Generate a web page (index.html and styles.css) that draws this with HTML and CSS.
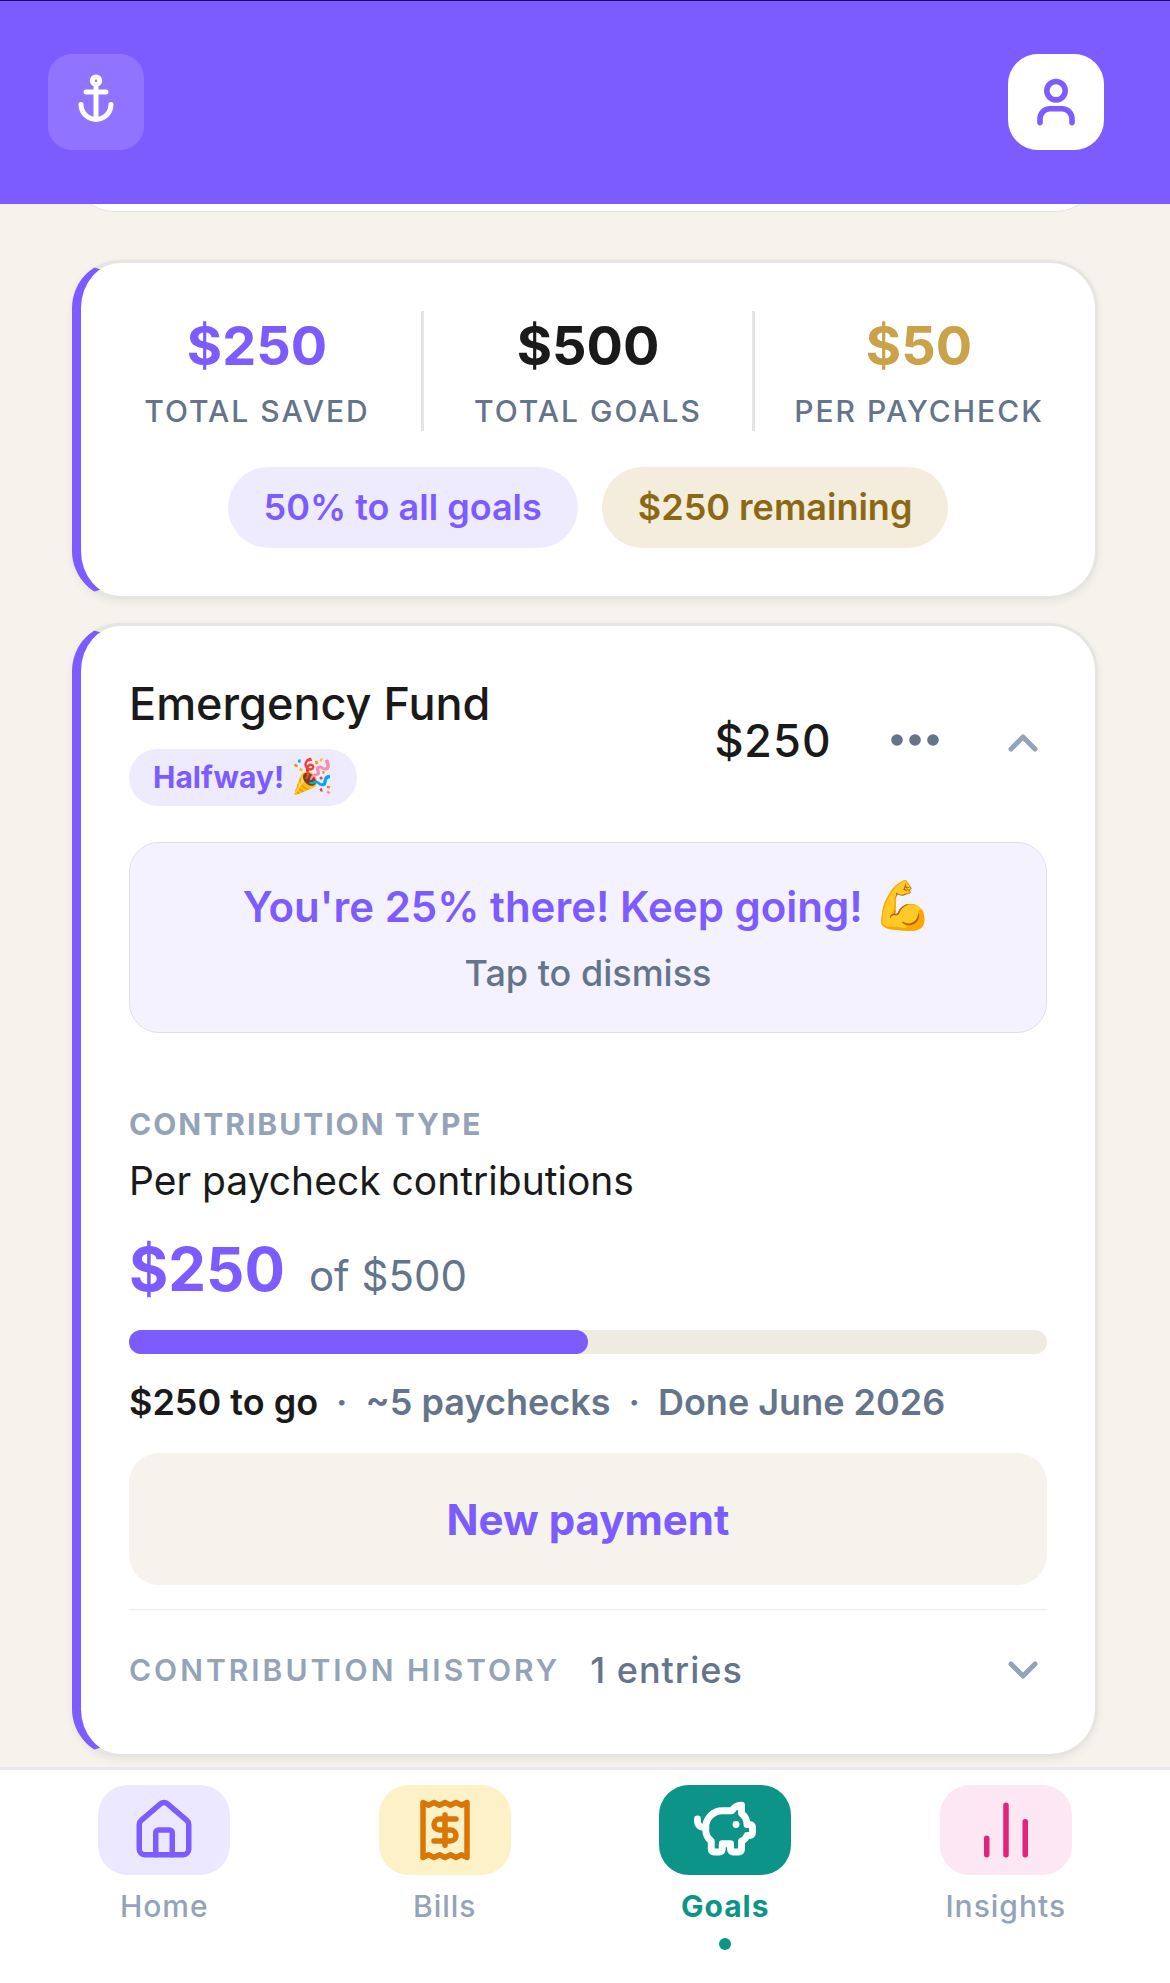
FILE: index.html
```html
<!DOCTYPE html>
<html lang="en">
<head>
    <meta charset="UTF-8">
    <meta name="viewport" content="width=device-width, initial-scale=1.0">
    <title>Goals</title>
    <link rel="stylesheet" href="styles.css">
</head>
<body>
    <header class="topbar">
        <button class="tile anchor" aria-label="Menu">
            <svg viewBox="0 0 60 60" fill="none" stroke="currentColor" stroke-width="5" stroke-linecap="round">
                <circle cx="30" cy="8.7" r="3.7"/>
                <path d="M30 12.5V47M20 20h20M15 32.5a15 15 0 0 0 30 0"/>
            </svg>
        </button>
        <button class="tile user" aria-label="Account">
            <svg viewBox="0 0 60 60" fill="none" stroke="currentColor" stroke-width="5.6" stroke-linecap="round">
                <circle cx="30" cy="18.7" r="9.2"/>
                <path d="M14 50.4v-3.6a10 10 0 0 1 10-10h12a10 10 0 0 1 10 10v3.6"/>
            </svg>
        </button>
    </header>

    <main class="content">
        <!-- end of the card scrolled under the top bar -->
        <div class="scrolled"></div>

        <section class="card summary">
            <div class="stats">
                <div class="stat">
                    <div class="value purple">$250</div>
                    <div class="name">TOTAL SAVED</div>
                </div>
                <div class="divider"></div>
                <div class="stat">
                    <div class="value">$500</div>
                    <div class="name">TOTAL GOALS</div>
                </div>
                <div class="divider"></div>
                <div class="stat">
                    <div class="value gold">$50</div>
                    <div class="name">PER PAYCHECK</div>
                </div>
            </div>
            <div class="pills">
                <span class="pill">50% to all goals</span>
                <span class="pill pill-gold">$250 remaining</span>
            </div>
        </section>

        <section class="card goal">
            <div class="goal-head">
                <div class="goal-title">
                    <h2>Emergency Fund</h2>
                    <span class="badge">Halfway! <span class="emoji">🎉</span></span>
                </div>
                <span class="amount">$250</span>
                <button class="more" aria-label="More options">
                    <svg viewBox="0 0 48 12" fill="currentColor">
                        <circle cx="6" cy="6" r="5.8"/>
                        <circle cx="24" cy="6" r="5.8"/>
                        <circle cx="42" cy="6" r="5.8"/>
                    </svg>
                </button>
                <button class="chevron" aria-label="Collapse">
                    <svg viewBox="0 0 48 48" fill="none" stroke="currentColor" stroke-width="5" stroke-linecap="round" stroke-linejoin="round">
                        <path d="M12 33l12-12 12 12"/>
                    </svg>
                </button>
            </div>

            <button class="banner">
                <span class="banner-title">You're 25% there! Keep going! <span class="emoji">💪</span></span>
                <span class="banner-hint">Tap to dismiss</span>
            </button>

            <div class="label">CONTRIBUTION TYPE</div>
            <div class="type">Per paycheck contributions</div>
            <div class="progress-text">
                <span class="saved">$250</span>
                <span class="target">of $500</span>
            </div>
            <div class="bar"><div class="fill" style="width:50%"></div></div>
            <div class="meta">
                <span class="togo">$250 to go</span>
                <span>·</span>
                <span>~5 paychecks</span>
                <span>·</span>
                <span>Done June 2026</span>
            </div>
            <button class="payment">New payment</button>
            <button class="history">
                <span class="label wide">CONTRIBUTION HISTORY</span>
                <span class="entries">1 entries</span>
                <span class="chevron">
                    <svg viewBox="0 0 48 48" fill="none" stroke="currentColor" stroke-width="5" stroke-linecap="round" stroke-linejoin="round">
                        <path d="M12 18l12 12 12-12"/>
                    </svg>
                </span>
            </button>
        </section>
    </main>

    <nav class="tabs">
        <a href="#home" class="tab home">
            <span class="icon">
                <svg viewBox="0 0 24 24">
                    <path d="M3 10a2 2 0 0 1 .709-1.528l7-5.999a2 2 0 0 1 2.582 0l7 5.999A2 2 0 0 1 21 10v9a2 2 0 0 1-2 2H5a2 2 0 0 1-2-2z"/>
                    <path d="M15 21v-8a1 1 0 0 0-1-1h-4a1 1 0 0 0-1 1v8"/>
                </svg>
            </span>
            Home
        </a>
        <a href="#bills" class="tab bills">
            <span class="icon">
                <svg viewBox="0 0 24 24">
                    <path d="M4 2v20l2-1 2 1 2-1 2 1 2-1 2 1 2-1 2 1V2l-2 1-2-1-2 1-2-1-2 1-2-1-2 1Z"/>
                    <path d="M16 8h-6a2 2 0 1 0 0 4h4a2 2 0 1 1 0 4H8M12 17.5v-11"/>
                </svg>
            </span>
            Bills
        </a>
        <a href="#goals" class="tab goals active">
            <span class="icon">
                <svg viewBox="0 0 24 24">
                    <path d="M11 17h3v2a1 1 0 0 0 1 1h2a1 1 0 0 0 1-1v-3a3.16 3.16 0 0 0 2-2h1a1 1 0 0 0 1-1v-2a1 1 0 0 0-1-1h-1a5 5 0 0 0-2-4V3a4 4 0 0 0-3.2 1.6l-.3.4H11a6 6 0 0 0-6 6v1a5 5 0 0 0 2 4v3a1 1 0 0 0 1 1h2a1 1 0 0 0 1-1z"/>
                    <path d="M16 10h.01M2 8v1a2 2 0 0 0 2 2h1"/>
                </svg>
            </span>
            Goals
        </a>
        <a href="#insights" class="tab insights">
            <span class="icon">
                <svg viewBox="0 0 24 24">
                    <path d="M5 21v-6M12 21V3M19 21V9"/>
                </svg>
            </span>
            Insights
        </a>
    </nav>
</body>
</html>
```
FILE: styles.css
```css
* {
    margin: 0;
    padding: 0;
    box-sizing: border-box;
}
body {
    min-height: 100vh;
    display: flex;
    flex-direction: column;
    background: #f6f3ec;
    color: #1a1a1a;
    font-family: Inter, "Liberation Sans", sans-serif;
    font-size: 36px;
}
button {
    border: none;
    background: none;
    font: inherit;
    color: inherit;
    cursor: pointer;
}
svg {
    display: block;
}
.topbar {
    display: flex;
    justify-content: space-between;
    padding: 53px 66px 54px 48px;
    border-top: 1px solid #12006b;
    background: #7c5cff;
    position: relative;
    z-index: 1;
}
.tile {
    width: 96px;
    height: 96px;
    border-radius: 24px;
    display: flex;
    align-items: center;
    justify-content: center;
}
.tile svg {
    width: 60px;
    height: 60px;
}
.anchor {
    background: rgba(255, 255, 255, .15);
    color: #fff;
}
.user {
    background: #fff;
    color: #7c5cff;
    border-radius: 30px;
}
.content {
    flex: 1;
    padding: 0 72px 10px;
}
.scrolled {
    height: 96px;
    margin-top: -88px;
    margin-bottom: 48px;
    background: #fff;
    border: 1px solid #e5e5e0;
    border-radius: 42px;
}
.card {
    background: #fff;
    border: 3px solid #e5e5e2;
    border-left: 9px solid #7c5cff;
    border-radius: 48px;
    box-shadow: 0 3px 9px rgba(0, 0, 0, .06);
}
.summary {
    padding: 48px 12px;
    margin-bottom: 24px;
}
.stats {
    display: flex;
    text-align: center;
}
.stat {
    flex: 1;
}
.divider {
    width: 3px;
    background: #e5e5e5;
}
.value {
    font-size: 54px;
    line-height: 70px;
    font-weight: 700;
    margin-bottom: 10px;
}
.name {
    font-size: 30px;
    line-height: 40px;
    font-weight: 500;
    letter-spacing: 2px;
    color: #64748b;
}
.purple {
    color: #7c5cff;
}
.gold {
    color: #c9a24a;
}
.pills {
    display: flex;
    justify-content: center;
    gap: 24px;
    margin-top: 36px;
}
.pill {
    padding: 0 36px;
    line-height: 81px;
    border-radius: 42px;
    font-weight: 600;
    background: #efebff;
    color: #7c5cff;
}
.pill-gold {
    background: #f4eddd;
    color: #8b6914;
}
.goal {
    padding: 48px;
}
.goal-head {
    display: flex;
    align-items: center;
    gap: 36px;
    margin-bottom: 36px;
}
.goal-title {
    flex: 1;
    display: flex;
    flex-direction: column;
    align-items: flex-start;
    gap: 15px;
}
h2 {
    font-size: 45px;
    line-height: 60px;
    font-weight: 500;
}
.badge {
    height: 57px;
    padding: 0 24px;
    border-radius: 30px;
    background: #efebff;
    color: #7c5cff;
    font-size: 30px;
    line-height: 57px;
    font-weight: 700;
}
.emoji {
    line-height: 1;
}
.badge .emoji {
    font-size: 34px;
}
.banner .emoji {
    font-size: 48px;
}
.amount {
    font-size: 45px;
    font-weight: 500;
    font-variant-numeric: tabular-nums;
}
.more {
    width: 96px;
    height: 96px;
    display: flex;
    align-items: center;
    justify-content: center;
    color: #64748b;
}
.more svg {
    width: 48px;
    height: 12px;
}
.chevron {
    color: #94a3b8;
}
.chevron svg {
    width: 48px;
    height: 48px;
}
.banner {
    display: flex;
    flex-direction: column;
    align-items: center;
    width: 100%;
    padding: 36px;
    gap: 15px;
    border: 1px solid #e0dfe4;
    border-radius: 30px;
    background: #f5f2ff;
    margin-bottom: 73px;
}
.banner-title {
    height: 56px;
    font-size: 42px;
    line-height: 56px;
    font-weight: 600;
    color: #7c5cff;
}
.banner-hint {
    line-height: 46px;
    font-weight: 500;
    color: #64748b;
}
.label {
    font-size: 30px;
    line-height: 36px;
    font-weight: 700;
    letter-spacing: 2px;
    color: #94a3b8;
}
.wide {
    font-weight: 600;
    letter-spacing: 3px;
}
.type {
    margin-top: 12px;
    font-size: 39px;
    line-height: 54px;
}
.progress-text {
    display: flex;
    align-items: baseline;
    gap: 24px;
    margin: 25px 0 18px;
    line-height: 72px;
}
.saved {
    font-size: 60px;
    font-weight: 700;
    color: #7c5cff;
}
.target {
    font-size: 42px;
    color: #64748b;
}
.bar {
    height: 24px;
    border-radius: 12px;
    background: #efeae2;
}
.fill {
    height: 100%;
    border-radius: 12px;
    background: #7c5cff;
}
.meta {
    display: flex;
    gap: 18px;
    margin: 24px 0 27px;
    line-height: 48px;
    font-weight: 600;
    color: #64748b;
}
.togo {
    color: #1a1a1a;
}
.payment {
    display: block;
    width: 100%;
    height: 132px;
    border-radius: 30px;
    background: #f6f3ec;
    color: #7c5cff;
    font-size: 42px;
    font-weight: 700;
    margin-bottom: 24px;
}
.history {
    display: flex;
    align-items: center;
    width: 100%;
    height: 97px;
    padding-top: 24px;
    border-top: 1px solid #ededea;
    text-align: left;
}
.entries {
    flex: 1;
    margin-left: 30px;
    font-weight: 500;
    letter-spacing: 1px;
    color: #64748b;
}
.tabs {
    display: flex;
    padding: 15px 24px 30px;
    border-top: 3px solid #e9e7f5;
    background: #fff;
    position: sticky;
    bottom: 0;
}
.tab {
    flex: 1;
    display: flex;
    flex-direction: column;
    align-items: center;
    height: 168px;
    font-size: 30px;
    line-height: 36px;
    font-weight: 500;
    letter-spacing: 1px;
    color: #94a3b8;
    text-decoration: none;
}
.icon {
    width: 132px;
    height: 90px;
    margin-bottom: 13px;
    border-radius: 30px;
    display: flex;
    align-items: center;
    justify-content: center;
}
.icon svg {
    width: 66px;
    height: 66px;
    fill: none;
    stroke: currentColor;
    stroke-width: 2;
    stroke-linecap: round;
    stroke-linejoin: round;
}
.home .icon {
    background: #ece8ff;
    color: #7c5cff;
}
.bills .icon {
    background: #fdf1c7;
    color: #d97706;
}
.goals .icon {
    background: #0d9488;
    color: #fff;
}
.goals .icon svg {
    stroke-width: 2.5;
}
.insights .icon {
    background: #fce7f3;
    color: #e1237b;
}
.active {
    color: #0d9488;
    font-weight: 700;
}
.active::after {
    content: "";
    width: 12px;
    height: 12px;
    margin-top: 14px;
    border-radius: 50%;
    background: #0d9488;
}
```
